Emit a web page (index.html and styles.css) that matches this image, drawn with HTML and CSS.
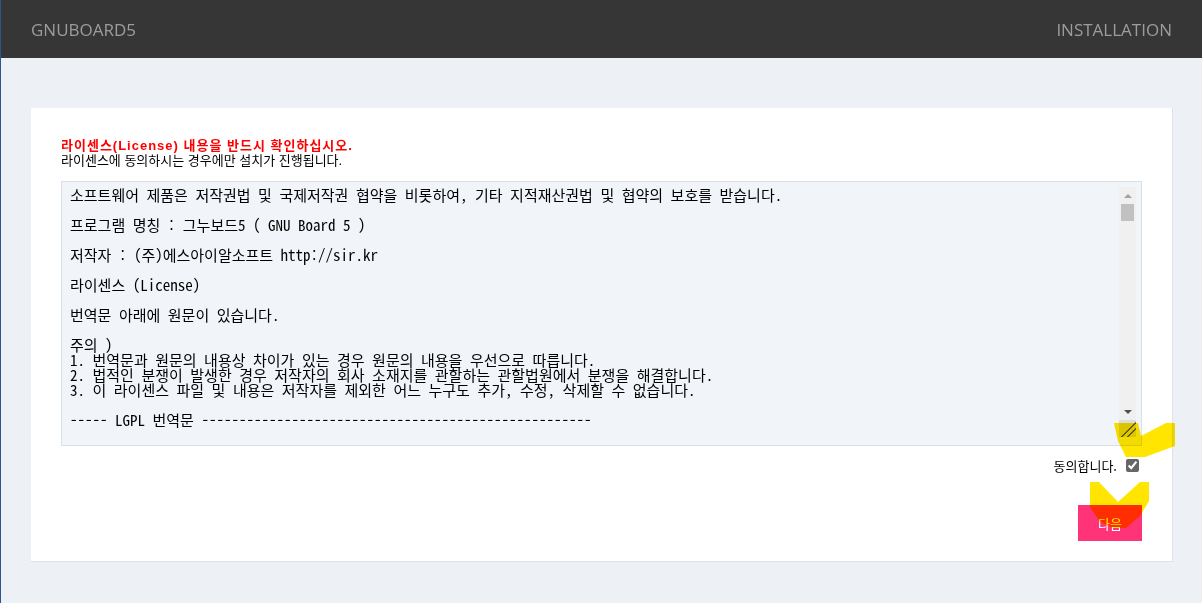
FILE: index.html
```html
<!DOCTYPE html>
<html lang="ko">
<head>
    <meta charset="UTF-8">
    <title>그누보드5 설치</title>
    <link rel="stylesheet" href="styles.css">
</head>
<body>
    <div id="hd">
        <h1 class="hd_logo">GNUBOARD5</h1>
        <span class="hd_step">INSTALLATION</span>
    </div>

    <div class="ins_bar">
        <div class="ins_title">
            <strong>라이센스(License) 내용을 반드시 확인하십시오.</strong>
            <span>라이센스에 동의하시는 경우에만 설치가 진행됩니다.</span>
        </div>

        <div class="ins_ta">
            <textarea readonly>소프트웨어 제품은 저작권법 및 국제저작권 협약을 비롯하여, 기타 지적재산권법 및 협약의 보호를 받습니다.

프로그램 명칭 : 그누보드5 ( GNU Board 5 )

저작자 : (주)에스아이알소프트 http://sir.kr

라이센스 (License)

번역문 아래에 원문이 있습니다.

주의 )
1. 번역문과 원문의 내용상 차이가 있는 경우 원문의 내용을 우선으로 따릅니다.
2. 법적인 분쟁이 발생한 경우 저작자의 회사 소재지를 관할하는 관할법원에서 분쟁을 해결합니다.
3. 이 라이센스 파일 및 내용은 저작자를 제외한 어느 누구도 추가, 수정, 삭제할 수 없습니다.

----- LGPL 번역문 ----------------------------------------------------

GNU 약소 일반 공중 사용 허가서

2.1판, 1999년 2월

Copyright (C) 1991, 1999 Free Software Foundation, Inc.
51 Franklin Street, Fifth Floor, Boston, MA 02110-1301 USA

누구든지 본 사용 허가서를 있는 그대로 복제하고 배포할 수 있습니다. 그러나 본 문서의 내용을 수정하는 것은 허용되지 않습니다.

전    문

소프트웨어에 적용되는 대부분의 사용 허가서(license)들은 소프트웨어에 대한 수정과 공유의 자유를 제한하려는 것을 그 목적으로 합니다.
</textarea>
            
            <div class="sbar">
                <span class="sbar_btn sbar_up"></span>
                <span class="sbar_thumb"></span>
                <span class="sbar_track"></span>
                <span class="sbar_btn sbar_down"></span>
                <span class="sbar_grip"></span>
            </div>
        </div>

        <div class="agree">
            <label for="agree_chk">동의합니다.</label>
            <input type="checkbox" id="agree_chk" checked>
        </div>

        <div class="btn_confirm">
            <button type="button" class="btn_next">다음</button>
        </div>
    </div>

    <!-- 캡처에 그려진 노란 체크 표시 -->
    <svg class="mark mark1" width="62" height="36" viewBox="0 0 62 36">
        <polygon points="0,0 24,0 27,13 52,0 61,0 61,23 31,34 12,34 4,18"/>
    </svg>
    <svg class="mark mark2" width="60" height="48" viewBox="0 0 60 48">
        <polygon points="0,0 9,0 28,20 50,0 59,0 59,19 50,34 36,46 24,46 10,40 0,25"/>
    </svg>
</body>
</html>
```

FILE: styles.css
```css
html, body {
    margin: 0;
    padding: 0;
}
body {
    min-height: 603px;
    background: #edf0f4;
    border-left: 1px solid #2d568f;
    font-family: "Noto Sans CJK KR", "Liberation Sans", sans-serif;
    font-size: 13px;
    color: #000;
}

#hd {
    display: flex;
    justify-content: space-between;
    align-items: center;
    height: 58px;
    padding: 0 30px;
    background: #363636;
    font-family: "Open Sans", "Noto Sans", sans-serif;
    font-size: 17px;
    color: #9c9c9c;
}
.hd_logo {
    margin: 0;
    font-size: 17px;
    font-weight: normal;
}

.ins_bar {
    margin: 50px 29px 0 30px;
    padding: 30px 30px 20px;
    background: #fff;
    border-right: 1px solid #dfe3e8;
    border-bottom: 1px solid #dfe3e8;
}
.ins_title {
    margin: 0 0 13px;
    font-family: "Liberation Sans", "Noto Sans CJK KR", sans-serif;
}
.ins_title strong,
.ins_title span {
    display: block;
    height: 15px;
    line-height: 15px;
}
.ins_title strong {
    color: #ff0000;
    letter-spacing: 1px;
}

.ins_ta {
    display: flex;
    padding: 5px;
    background: #f1f4f9;
    border: 1px solid #dbe0e8;
}
.ins_ta textarea {
    flex: 1;
    display: block;
    box-sizing: border-box;
    height: 253px;
    margin: 0;
    padding: 0 3px;
    border: 0;
    outline: 0;
    background: #f1f4f9;
    font-family: "Noto Sans Mono CJK KR", "Noto Sans CJK KR", monospace;
    font-size: 15px;
    line-height: 15px;
    color: #000;
    resize: none;
    overflow: hidden;
}

.sbar {
    display: flex;
    flex-direction: column;
    width: 17px;
    margin-bottom: 3px;
    background: #f0f0f0;
}
.sbar_btn {
    display: flex;
    justify-content: center;
    align-items: center;
    height: 17px;
}
.sbar_btn::before {
    content: "";
    border-left: 4px solid transparent;
    border-right: 4px solid transparent;
}
.sbar_up::before {
    border-bottom: 4px solid #a3a3a3;
}
.sbar_down::before {
    border-top: 4px solid #505050;
}
.sbar_thumb {
    height: 17px;
    margin: 0 2px;
    background: #c1c1c1;
}
.sbar_track {
    flex: 1;
}
.sbar_grip {
    height: 17px;
    background: linear-gradient(to bottom right, #dcdcdc 55%, #666 55%, #666 60%, #dcdcdc 60%, #dcdcdc 72%, #666 72%, #666 77%, #dcdcdc 77%);
}

.agree {
    display: flex;
    justify-content: flex-end;
    align-items: center;
    gap: 9px;
    margin-top: 12px;
    padding-right: 3px;
    line-height: 15px;
}
.agree input {
    width: 13px;
    height: 13px;
    margin: 0;
    accent-color: #666;
}

.btn_confirm {
    display: flex;
    justify-content: flex-end;
    margin-top: 32px;
}
.btn_next {
    width: 64px;
    height: 36px;
    border: 0;
    background: #ff3377;
    color: #fff;
    font-family: "Noto Sans CJK KR", sans-serif;
    font-size: 13px;
    cursor: pointer;
}

.mark {
    position: absolute;
    fill: #ffe500;
    mix-blend-mode: multiply;
}
.mark1 {
    left: 1114px;
    top: 423px;
}
.mark2 {
    left: 1090px;
    top: 482px;
}
```
